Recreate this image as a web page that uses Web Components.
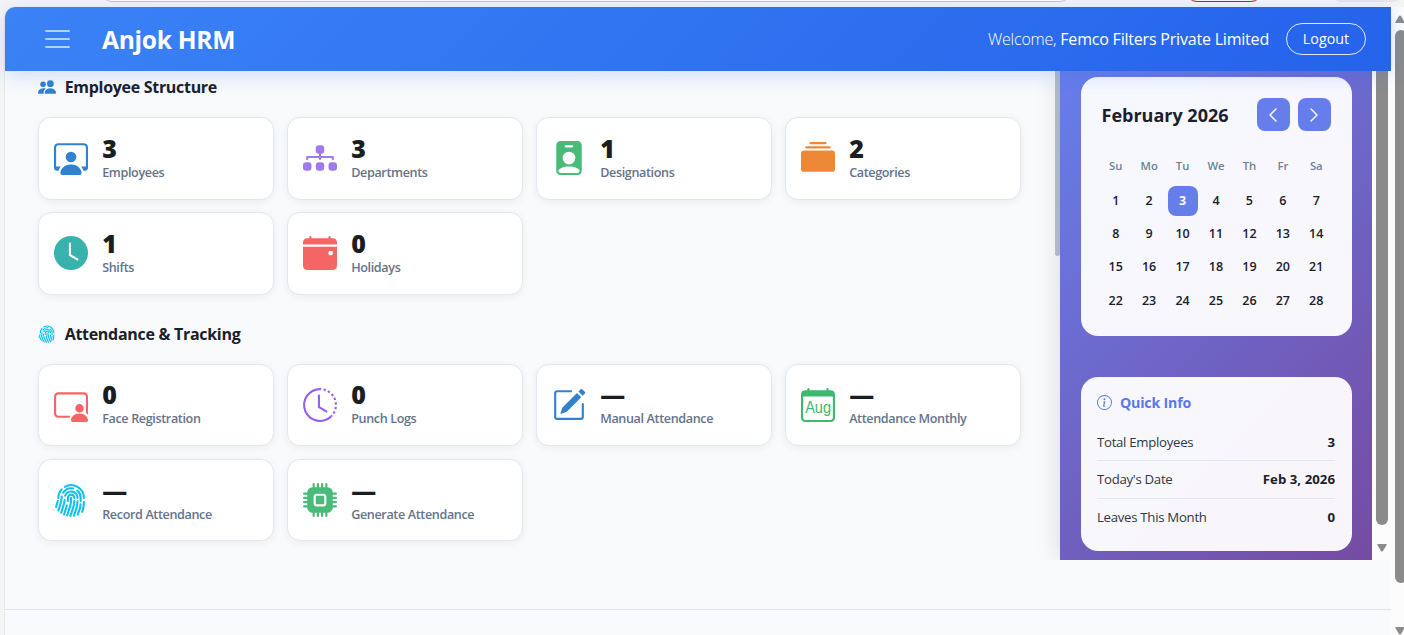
<!DOCTYPE html>
<html lang="en">
<head>
<meta charset="utf-8">
<title>Anjok HRM</title>
<style>
  html, body { margin: 0; height: 100%; overflow: hidden; }
  body {
    background: #f5f5f5;
    color: #1a202c;
    font-family: "Open Sans", "Noto Sans", sans-serif;
  }
</style>
</head>
<body>
<hrm-app></hrm-app>

<script>
const ICONS = {
  people: '<path d="M7 14s-1 0-1-1 1-4 5-4 5 3 5 4-1 1-1 1zm4-6a3 3 0 1 0 0-6 3 3 0 0 0 0 6m-5.784 6A2.24 2.24 0 0 1 5 13c0-1.355.68-2.75 1.936-3.72A6.3 6.3 0 0 0 5 9c-4 0-5 3-5 4s1 1 1 1zM4.5 8a2.5 2.5 0 1 0 0-5 2.5 2.5 0 0 0 0 5"/>',
  workspace: '<path d="M4 16s-1 0-1-1 1-4 5-4 5 3 5 4-1 1-1 1zm4-5.95a2.5 2.5 0 1 0 0-5 2.5 2.5 0 0 0 0 5"/><path d="M2 1a2 2 0 0 0-2 2v9.5A1.5 1.5 0 0 0 1.5 14h.653a5.4 5.4 0 0 1 1.066-2H1V3a1 1 0 0 1 1-1h12a1 1 0 0 1 1 1v9h-2.219c.554.654.89 1.373 1.066 2h.653a1.5 1.5 0 0 0 1.5-1.5V3a2 2 0 0 0-2-2z"/>',
  diagram: '<path d="M6 3.5A1.5 1.5 0 0 1 7.5 2h1A1.5 1.5 0 0 1 10 3.5v1A1.5 1.5 0 0 1 8.5 6v1H14a.5.5 0 0 1 .5.5v1a.5.5 0 0 1-1 0V8h-5v.5a.5.5 0 0 1-1 0V8h-5v.5a.5.5 0 0 1-1 0v-1A.5.5 0 0 1 2 7h5.5V6A1.5 1.5 0 0 1 6 4.5z"/><rect y="10" width="4" height="4" rx="1.5"/><rect x="6" y="10" width="4" height="4" rx="1.5"/><rect x="12" y="10" width="4" height="4" rx="1.5"/>',
  badge: '<path d="M2 2a2 2 0 0 1 2-2h8a2 2 0 0 1 2 2v12a2 2 0 0 1-2 2H4a2 2 0 0 1-2-2zm4.5 0a.5.5 0 0 0 0 1h3a.5.5 0 0 0 0-1zM8 11a3 3 0 1 0 0-6 3 3 0 0 0 0 6m5 2.755C12.146 12.825 10.623 12 8 12s-4.146.826-5 1.755V14a1 1 0 0 0 1 1h8a1 1 0 0 0 1-1z"/>',
  collection: '<path d="M0 13a1.5 1.5 0 0 0 1.5 1.5h13A1.5 1.5 0 0 0 16 13V6a1.5 1.5 0 0 0-1.5-1.5h-13A1.5 1.5 0 0 0 0 6zM2 3a.5.5 0 0 0 .5.5h11a.5.5 0 0 0 0-1h-11A.5.5 0 0 0 2 3m2-2a.5.5 0 0 0 .5.5h7a.5.5 0 0 0 0-1h-7A.5.5 0 0 0 4 1"/>',
  clock: '<path d="M16 8A8 8 0 1 1 0 8a8 8 0 0 1 16 0M8 3.5a.5.5 0 0 0-1 0V9a.5.5 0 0 0 .252.434l3.5 2a.5.5 0 0 0 .496-.868L8 8.71z"/>',
  event: '<path d="M4 .5a.5.5 0 0 0-1 0V1H2a2 2 0 0 0-2 2v1h16V3a2 2 0 0 0-2-2h-1V.5a.5.5 0 0 0-1 0V1H4zM16 14V5H0v9a2 2 0 0 0 2 2h12a2 2 0 0 0 2-2m-3.5-7h1a.5.5 0 0 1 .5.5v1a.5.5 0 0 1-.5.5h-1a.5.5 0 0 1-.5-.5v-1a.5.5 0 0 1 .5-.5"/>',
  video: '<path d="M14 9.5a2 2 0 1 1-4 0 2 2 0 0 1 4 0m-6 5.7c0 .8.8.8.8.8h6.4s.8 0 .8-.8-.8-3.2-4-3.2-4 2.4-4 3.2"/><path d="M2 2a2 2 0 0 0-2 2v8a2 2 0 0 0 2 2h5.243c.122-.326.295-.668.526-1H2a1 1 0 0 1-1-1V4a1 1 0 0 1 1-1h12a1 1 0 0 1 1 1v7.81c.353.23.656.496.91.783Q16 12.312 16 12V4a2 2 0 0 0-2-2z"/>',
  history: '<path d="M8.515 1.019A7 7 0 0 0 8 1V0a8 8 0 0 1 .589.022zm2.004.45a7 7 0 0 0-.985-.299l.219-.976q.576.129 1.126.342zm1.37.71a7 7 0 0 0-.439-.27l.493-.87a8 8 0 0 1 .979.654l-.615.789a7 7 0 0 0-.418-.302zm1.834 1.79a7 7 0 0 0-.653-.796l.724-.69q.406.429.747.91zm.744 1.352a7 7 0 0 0-.214-.468l.893-.45a8 8 0 0 1 .45 1.088l-.95.313a7 7 0 0 0-.179-.483m.53 2.507a7 7 0 0 0-.1-1.025l.985-.17q.1.58.116 1.17zm-.131 1.538q.05-.254.081-.51l.993.123a8 8 0 0 1-.23 1.155l-.964-.267q.069-.247.12-.501m-.952 2.379q.276-.436.486-.908l.914.405q-.24.54-.555 1.038zm-.964 1.205q.183-.183.35-.378l.758.653a8 8 0 0 1-.401.432z"/><path d="M8 1a7 7 0 1 0 4.95 11.95l.707.707A8.001 8.001 0 1 1 8 0z"/><path d="M7.5 3a.5.5 0 0 1 .5.5v5.21l3.248 1.856a.5.5 0 0 1-.496.868l-3.5-2A.5.5 0 0 1 7 9V3.5a.5.5 0 0 1 .5-.5"/>',
  pencil: '<path d="M15.502 1.94a.5.5 0 0 1 0 .706L14.459 3.69l-2-2L13.502.646a.5.5 0 0 1 .707 0l1.293 1.293zm-1.75 2.456-2-2L4.939 9.21a.5.5 0 0 0-.121.196l-.805 2.414a.25.25 0 0 0 .316.316l2.414-.805a.5.5 0 0 0 .196-.12l6.813-6.814z"/><path d="M1 13.5A1.5 1.5 0 0 0 2.5 15h11a1.5 1.5 0 0 0 1.5-1.5v-6a.5.5 0 0 0-1 0v6a.5.5 0 0 1-.5.5h-11a.5.5 0 0 1-.5-.5v-11a.5.5 0 0 1 .5-.5H9a.5.5 0 0 0 0-1H2.5A1.5 1.5 0 0 0 1 2.5z"/>',
  month: '<path d="M3.5 0a.5.5 0 0 1 .5.5V1h8V.5a.5.5 0 0 1 1 0V1h1a2 2 0 0 1 2 2v11a2 2 0 0 1-2 2H2a2 2 0 0 1-2-2V3a2 2 0 0 1 2-2h1V.5a.5.5 0 0 1 .5-.5M1 4v10a1 1 0 0 0 1 1h12a1 1 0 0 0 1-1V4z"/><text x="8.05" y="11.6" text-anchor="middle" font-family="Liberation Sans, sans-serif" font-size="7.4" textLength="12.2" lengthAdjust="spacingAndGlyphs">Aug</text>',
  fingerprint: '<path d="M8.06 6.5a.5.5 0 0 1 .5.5v.776a11.5 11.5 0 0 1-.552 3.519l-1.331 4.14a.5.5 0 0 1-.952-.305l1.33-4.141a10.5 10.5 0 0 0 .504-3.213V7a.5.5 0 0 1 .5-.5Z"/><path d="M6.06 7a2 2 0 1 1 4 0 .5.5 0 1 1-1 0 1 1 0 1 0-2 0v.332q0 .613-.066 1.221A.5.5 0 0 1 6 8.447q.06-.555.06-1.115zm3.509 1a.5.5 0 0 1 .487.513 11.5 11.5 0 0 1-.587 3.339l-1.266 3.8a.5.5 0 0 1-.949-.317l1.267-3.8a10.5 10.5 0 0 0 .535-3.048A.5.5 0 0 1 9.569 8m-3.356 2.115a.5.5 0 0 1 .33.626L5.24 14.939a.5.5 0 1 1-.955-.296l1.303-4.199a.5.5 0 0 1 .625-.329"/><path d="M4.759 5.833A3.501 3.501 0 0 1 11.559 7a.5.5 0 0 1-1 0 2.5 2.5 0 0 0-4.857-.833.5.5 0 1 1-.943-.334m.3 1.67a.5.5 0 0 1 .449.546 10.7 10.7 0 0 1-.4 2.031l-1.222 4.072a.5.5 0 1 1-.958-.287L4.15 9.793a9.7 9.7 0 0 0 .363-1.842.5.5 0 0 1 .546-.449Zm6 .647a.5.5 0 0 1 .5.5c0 1.28-.213 2.552-.632 3.762l-1.09 3.145a.5.5 0 0 1-.944-.327l1.089-3.145c.382-1.105.578-2.266.578-3.435a.5.5 0 0 1 .5-.5Z"/><path d="M3.902 4.222a5 5 0 0 1 5.202-2.113.5.5 0 0 1-.208.979 4 4 0 0 0-4.163 1.69.5.5 0 0 1-.831-.556m6.72-.955a.5.5 0 0 1 .705-.052A4.99 4.99 0 0 1 13.059 7v1.5a.5.5 0 1 1-1 0V7a3.99 3.99 0 0 0-1.386-3.028.5.5 0 0 1-.051-.705M3.68 5.842a.5.5 0 0 1 .422.568q-.044.289-.044.59c0 .71-.1 1.417-.298 2.1l-1.14 3.923a.5.5 0 1 1-.96-.279L2.8 8.821A6.5 6.5 0 0 0 3.058 7q0-.375.054-.736a.5.5 0 0 1 .568-.422m8.882 3.66a.5.5 0 0 1 .456.54c-.084 1-.298 1.986-.64 2.934l-.744 2.068a.5.5 0 0 1-.941-.338l.745-2.07a10.5 10.5 0 0 0 .584-2.678.5.5 0 0 1 .54-.456"/><path d="M4.81 1.37A6.5 6.5 0 0 1 14.56 7a.5.5 0 1 1-1 0 5.5 5.5 0 0 0-8.25-4.765.5.5 0 0 1-.5-.865m-.89 1.257a.5.5 0 0 1 .04.706A5.48 5.48 0 0 0 2.56 7a.5.5 0 0 1-1 0c0-1.664.626-3.184 1.655-4.333a.5.5 0 0 1 .706-.04ZM1.915 8.02a.5.5 0 0 1 .346.616l-.779 2.767a.5.5 0 1 1-.962-.27l.778-2.767a.5.5 0 0 1 .617-.346m12.15.481a.5.5 0 0 1 .49.51c-.03 1.499-.161 3.025-.727 4.533l-.07.187a.5.5 0 0 1-.936-.351l.07-.187c.506-1.35.634-2.74.663-4.202a.5.5 0 0 1 .51-.49"/>',
  cpu: '<path d="M6.5 6a.5.5 0 0 0-.5.5v3a.5.5 0 0 0 .5.5h3a.5.5 0 0 0 .5-.5v-3a.5.5 0 0 0-.5-.5z"/><path d="M5.5.5a.5.5 0 0 0-1 0V2A2.5 2.5 0 0 0 2 4.5H.5a.5.5 0 0 0 0 1H2v1H.5a.5.5 0 0 0 0 1H2v1H.5a.5.5 0 0 0 0 1H2v1H.5a.5.5 0 0 0 0 1H2A2.5 2.5 0 0 0 4.5 14v1.5a.5.5 0 0 0 1 0V14h1v1.5a.5.5 0 0 0 1 0V14h1v1.5a.5.5 0 0 0 1 0V14h1v1.5a.5.5 0 0 0 1 0V14a2.5 2.5 0 0 0 2.5-2.5h1.5a.5.5 0 0 0 0-1H14v-1h1.5a.5.5 0 0 0 0-1H14v-1h1.5a.5.5 0 0 0 0-1H14v-1h1.5a.5.5 0 0 0 0-1H14A2.5 2.5 0 0 0 11.5 2V.5a.5.5 0 0 0-1 0V2h-1V.5a.5.5 0 0 0-1 0V2h-1V.5a.5.5 0 0 0-1 0V2h-1zm1 4.5h3A1.5 1.5 0 0 1 11 6.5v3A1.5 1.5 0 0 1 9.5 11h-3A1.5 1.5 0 0 1 5 9.5v-3A1.5 1.5 0 0 1 6.5 5"/>',
  info: '<path d="M8 15A7 7 0 1 1 8 1a7 7 0 0 1 0 14m0 1A8 8 0 1 0 8 0a8 8 0 0 0 0 16"/><path d="m8.93 6.588-2.29.287-.082.38.45.083c.294.07.352.176.288.469l-.738 3.468c-.194.897.105 1.319.808 1.319.545 0 1.178-.252 1.465-.598l.088-.416c-.2.176-.492.246-.686.246-.275 0-.375-.193-.304-.533zM9 4.5a1 1 0 1 1-2 0 1 1 0 0 1 2 0"/>',
  left: '<path d="M11 2 5 8l6 6" fill="none" stroke="currentColor" stroke-width="1.4" stroke-linecap="round" stroke-linejoin="round"/>',
  right: '<path d="m5 2 6 6-6 6" fill="none" stroke="currentColor" stroke-width="1.4" stroke-linecap="round" stroke-linejoin="round"/>'
};

class HrmIcon extends HTMLElement {
  constructor() {
    super();
    this.attachShadow({ mode: 'open' });
  }

  connectedCallback() {
    this.shadowRoot.innerHTML = `
      <style>
        :host { display: block; flex: none; width: 16px; height: 16px; }
        svg { display: block; width: 100%; height: 100%; overflow: visible; }
      </style>
      <svg viewBox="0 0 16 16" fill="currentColor">${ICONS[this.getAttribute('name')]}</svg>
    `;
  }
}
customElements.define('hrm-icon', HrmIcon);

class HrmHeader extends HTMLElement {
  constructor() {
    super();
    this.attachShadow({ mode: 'open' }).innerHTML = `
      <style>
        :host {
          display: flex;
          align-items: center;
          box-sizing: border-box;
          flex: none;
          height: 64px;
          padding: 0 25px 0 40px;
          border-radius: 10px 0 0 0;
          background: linear-gradient(135deg, #3b82f6 0%, #2563eb 100%);
          box-shadow: 0 4px 20px rgba(37, 99, 235, .2);
          color: #fff;
          position: relative;
          z-index: 2;
        }
        .menu { display: flex; flex-direction: column; gap: 6.4px; width: 25px; }
        .menu i { height: 2px; background: rgba(255, 255, 255, .62); border-radius: 1px; }
        h1 { margin: 0 auto 0 32px; font-size: 24.6px; font-weight: 750; letter-spacing: -.3px; }
        .welcome { font-size: 16px; font-weight: 340; letter-spacing: -.2px; }
        .welcome b { font-weight: 520; }
        .logout {
          box-sizing: border-box;
          width: 80px;
          height: 32px;
          margin-left: 17px;
          border: 1px solid rgba(255, 255, 255, .85);
          border-radius: 16px;
          font-size: 14.3px;
          font-weight: 520;
          line-height: 30px;
          text-align: center;
        }
      </style>
      <div class="menu"><i></i><i></i><i></i></div>
      <h1>Anjok HRM</h1>
      <div class="welcome">Welcome, <b><slot></slot></b></div>
      <div class="logout">Logout</div>
    `;
  }
}
customElements.define('hrm-header', HrmHeader);

class HrmSection extends HTMLElement {
  constructor() {
    super();
    this.attachShadow({ mode: 'open' });
  }

  connectedCallback() {
    this.shadowRoot.innerHTML = `
      <style>
        :host { display: block; }
        h2 {
          display: flex;
          align-items: center;
          gap: 9px;
          height: 24px;
          margin: 0 0 18px;
          font-size: 16px;
          font-weight: 700;
          letter-spacing: -.3px;
        }
        hrm-icon { width: 18px; height: 18px; color: ${this.getAttribute('color')}; }
        .grid { display: grid; grid-template-columns: repeat(4, 236.3px); gap: 12.7px; }
      </style>
      <h2><hrm-icon name="${this.getAttribute('icon')}"></hrm-icon>${this.getAttribute('heading').replace('&', '&amp;')}</h2>
      <div class="grid"><slot></slot></div>
    `;
  }
}
customElements.define('hrm-section', HrmSection);

class HrmCard extends HTMLElement {
  constructor() {
    super();
    this.attachShadow({ mode: 'open' });
  }

  connectedCallback() {
    this.shadowRoot.innerHTML = `
      <style>
        :host {
          display: flex;
          align-items: center;
          gap: 14px;
          box-sizing: border-box;
          height: 82.5px;
          padding: 0 15.5px;
          border: 1px solid #e2e8f0;
          border-radius: 13px;
          background: #fff;
          box-shadow: 0 2px 8px rgba(0, 0, 0, .06);
        }
        hrm-icon { width: 34px; height: 34px; color: ${this.getAttribute('color')}; }
        .value { height: 29px; font-size: 25px; font-weight: 800; line-height: 27px; color: #1a1d21; }
        .label { height: 18px; font-size: 12.6px; font-weight: 560; line-height: 18px; color: #64748b; letter-spacing: -.37px; }
      </style>
      <hrm-icon name="${this.getAttribute('icon')}"></hrm-icon>
      <div>
        <div class="value">${this.getAttribute('value')}</div>
        <div class="label"><slot></slot></div>
      </div>
    `;
  }
}
customElements.define('hrm-card', HrmCard);

class HrmCalendar extends HTMLElement {
  constructor() {
    super();
    const names = ['Su', 'Mo', 'Tu', 'We', 'Th', 'Fr', 'Sa'];
    const days = Array.from({ length: 28 }, (_, i) => i + 1);
    this.attachShadow({ mode: 'open' }).innerHTML = `
      <style>
        :host {
          display: block;
          box-sizing: border-box;
          height: 259px;
          padding: 21px;
          border-radius: 17px;
          background: rgba(255, 255, 255, .95);
        }
        header { display: flex; align-items: center; gap: 8px; height: 33px; margin-bottom: 16px; }
        h3 { margin: 0 auto 0 0; font-size: 18px; font-weight: 700; letter-spacing: 0; }
        button {
          display: flex;
          align-items: center;
          justify-content: center;
          width: 33px;
          height: 33px;
          padding: 0;
          border: 0;
          border-radius: 8px;
          background: #667eea;
          color: #fff;
        }
        .grid {
          display: grid;
          grid-template-columns: repeat(7, 1fr);
          grid-template-rows: 37px;
          grid-auto-rows: 33.4px;
          justify-items: center;
          align-items: center;
          margin: 0 -2.5px;
        }
        .name { font-size: 11.3px; font-weight: 600; color: #718096; }
        .day { width: 30px; height: 30px; border-radius: 8px; font-size: 12.5px; font-weight: 560; line-height: 30px; text-align: center; }
        .today { background: #667eea; color: #fff; font-weight: 750; }
      </style>
      <header>
        <h3>February 2026</h3>
        <button><hrm-icon name="left"></hrm-icon></button>
        <button><hrm-icon name="right"></hrm-icon></button>
      </header>
      <div class="grid">
        ${names.map(n => `<div class="name">${n}</div>`).join('')}
        ${days.map(d => `<div class="day${d === 3 ? ' today' : ''}">${d}</div>`).join('')}
      </div>
    `;
  }
}
customElements.define('hrm-calendar', HrmCalendar);

class HrmInfo extends HTMLElement {
  constructor() {
    super();
    this.attachShadow({ mode: 'open' }).innerHTML = `
      <style>
        :host {
          display: block;
          box-sizing: border-box;
          height: 174px;
          padding: 15px 16.5px;
          border-radius: 17px;
          background: rgba(255, 255, 255, .95);
        }
        h3 { display: flex; align-items: center; gap: 8px; height: 20px; margin: 0 0 12px; font-size: 14.2px; font-weight: 700; line-height: 19px; color: #5a78ec; letter-spacing: -.2px; }
        hrm-icon { width: 15px; height: 15px; }
        .row { display: flex; align-items: center; justify-content: space-between; height: 36.3px; font-size: 13.2px; color: #2d3748; letter-spacing: -.28px; }
        .row + .row { border-top: 1px solid #e2e8f0; }
        b { font-weight: 700; color: #1a202c; letter-spacing: .05px; }
      </style>
      <h3><hrm-icon name="info"></hrm-icon>Quick Info</h3>
      <div class="row"><span>Total Employees</span><b>3</b></div>
      <div class="row"><span>Today's Date</span><b>Feb 3, 2026</b></div>
      <div class="row"><span>Leaves This Month</span><b>0</b></div>
    `;
  }
}
customElements.define('hrm-info', HrmInfo);

class HrmApp extends HTMLElement {
  constructor() {
    super();
    this.attachShadow({ mode: 'open' }).innerHTML = `
      <style>
        :host { display: flex; flex-direction: column; height: 635px; overflow: hidden; }
        /* bottom edge of the browser toolbar */
        .chrome { display: flex; flex: none; height: 7px; padding-left: 100px; }
        .chrome i { box-sizing: border-box; height: 20px; margin-top: -18px; border: 1px solid #c4c4c4; border-radius: 0 0 12px 12px; }
        .chrome .url { width: 972px; background: #fff; }
        .chrome .red { width: 78px; margin-left: 113px; border: 1.5px solid #b3261e; }
        .chrome .grey { width: 74px; margin-left: 67px; border-color: #e4e4e4; background: #e9e9e9; }
        .window { display: flex; flex: 1; }
        .frame { display: flex; flex-direction: column; width: 1386px; margin-left: 4px; border-left: 1px solid #e6e8eb; border-radius: 10px 0 0 0; background: #f8fafc; }
        .body { display: flex; height: 489px; flex: none; }
        main { box-sizing: border-box; width: 1050px; padding: 4px 0 0 32.7px; }
        hrm-section + hrm-section { margin-top: 27px; }
        .thumb { flex: none; width: 5px; height: 185px; background: #b8c4ce; border-radius: 0 0 3px 3px; }
        aside {
          display: flex;
          flex-direction: column;
          gap: 41px;
          box-sizing: border-box;
          width: 312px;
          padding: 6px 20.5px 0;
          background: linear-gradient(135deg, #667eea 0%, #764ba2 100%);
          box-shadow: -4px 0 20px rgba(0, 0, 0, .1);
          clip-path: inset(0 0 0 -30px);
        }
        .scroll { flex: 1; display: flex; flex-direction: column; align-items: center; background: #fcfcfc; }
        .scroll i { width: 12px; height: 454px; background: #8b8b8b; border-radius: 0 0 6px 6px; }
        .scroll svg { margin-top: 19px; }
        .foot { height: 49px; border-bottom: 1px solid #dfe4ea; }
        .outer { display: flex; flex: none; width: 13px; flex-direction: column; background: #fcfcfc; overflow: hidden; }
        .outer i { flex: none; width: 12px; height: 553px; margin: 7px 0 44px 4px; background: #8b8b8b; border-radius: 6px; }
        .outer svg { flex: none; margin-left: 4px; }
        .outer svg:first-child { margin-top: 8px; }
      </style>
      <div class="chrome"><i class="url"></i><i class="red"></i><i class="grey"></i></div>
      <div class="window">
        <div class="frame">
          <hrm-header>Femco Filters Private Limited</hrm-header>
          <div class="body">
            <main>
              <hrm-section icon="people" color="#3182ce" heading="Employee Structure">
                <hrm-card icon="workspace" color="#3182ce" value="3">Employees</hrm-card>
                <hrm-card icon="diagram" color="#9f7aea" value="3">Departments</hrm-card>
                <hrm-card icon="badge" color="#48bb78" value="1">Designations</hrm-card>
                <hrm-card icon="collection" color="#ed8936" value="2">Categories</hrm-card>
                <hrm-card icon="clock" color="#38b2ac" value="1">Shifts</hrm-card>
                <hrm-card icon="event" color="#f56565" value="0">Holidays</hrm-card>
              </hrm-section>
              <hrm-section icon="fingerprint" color="#12c2e9" heading="Attendance & Tracking">
                <hrm-card icon="video" color="#f56565" value="0">Face Registration</hrm-card>
                <hrm-card icon="history" color="#9461e8" value="0">Punch Logs</hrm-card>
                <hrm-card icon="pencil" color="#3182ce" value="—">Manual Attendance</hrm-card>
                <hrm-card icon="month" color="#3dba70" value="—">Attendance Monthly</hrm-card>
                <hrm-card icon="fingerprint" color="#12c2e9" value="—">Record Attendance</hrm-card>
                <hrm-card icon="cpu" color="#48bb78" value="—">Generate Attendance</hrm-card>
              </hrm-section>
            </main>
            <div class="thumb"></div>
            <aside>
              <hrm-calendar></hrm-calendar>
              <hrm-info></hrm-info>
            </aside>
            <div class="scroll">
              <i></i>
              <svg width="10" height="8" fill="#8b8b8b"><path d="M1 0h8q1 0 .6 1L6 7Q5 8 4 7L.4 1Q0 0 1 0"/></svg>
            </div>
          </div>
          <div class="foot"></div>
        </div>
        <div class="outer">
          <svg width="10" height="8" fill="#8b8b8b"><path d="M1 8h8q1 0 .6-1L6 1Q5 0 4 1L.4 7Q0 8 1 8"/></svg>
          <i></i>
          <svg width="10" height="8" fill="#8b8b8b"><path d="M1 0h8q1 0 .6 1L6 7Q5 8 4 7L.4 1Q0 0 1 0"/></svg>
        </div>
      </div>
    `;
  }
}
customElements.define('hrm-app', HrmApp);
</script>
</body>
</html>
